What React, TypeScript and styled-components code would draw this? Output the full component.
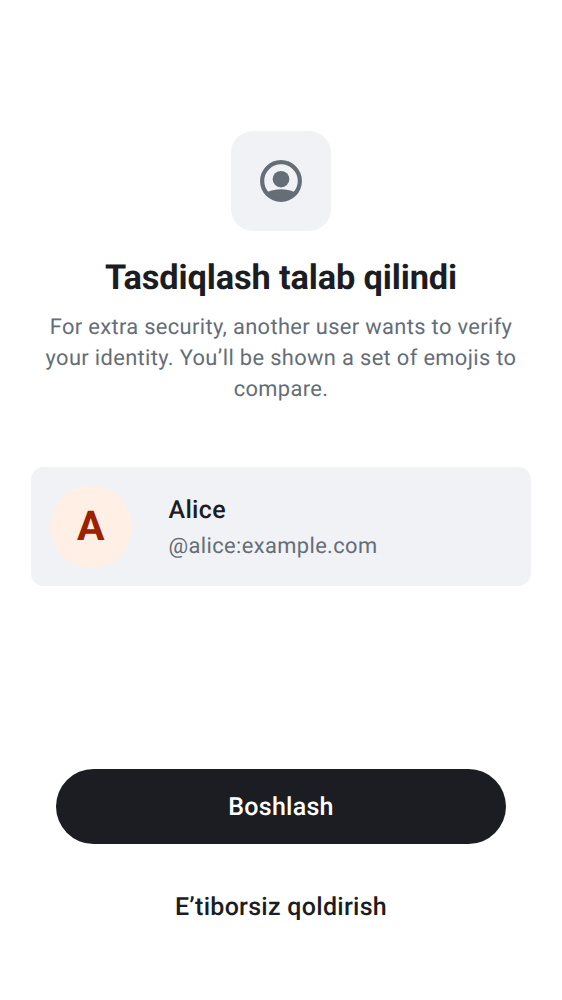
import React from "react";
import styled, { createGlobalStyle } from "styled-components";

const Global = createGlobalStyle`
  * { box-sizing: border-box; }
  body {
    margin: 0;
    background: #fff;
    font-family: Roboto, sans-serif;
    color: #1b1d22;
    text-rendering: geometricPrecision;
  }
`;
const Screen = styled.main`
  height: 1000px;
  padding: 131px 31px 0;
  display: flex;
  flex-direction: column;
  align-items: center;
`;
const IconTile = styled.div`
  width: 100px;
  height: 100px;
  flex: none;
  border-radius: 22px;
  background: #f0f2f5;
  display: grid;
  place-items: center;
`;
const Title = styled.h1`
  margin: 26px 0 0;
  font-size: 34.375px;
  line-height: 42px;
  font-weight: 660;
  letter-spacing: -0.13px;
  white-space: nowrap;
`;
const Description = styled.p`
  margin: 13px 0 0;
  font-size: 21.875px;
  line-height: 31px;
  letter-spacing: 0.35px;
  text-align: center;
  color: #656d77;
  span { display: block; white-space: nowrap; }
`;
const UserCard = styled.section`
  margin-top: 62px;
  width: 500px;
  height: 119px;
  flex: none;
  border-radius: 12.5px;
  background: #f0f2f5;
  padding-left: 18.75px;
  display: flex;
  align-items: center;
`;
const Avatar = styled.div`
  width: 82px;
  height: 82px;
  border-radius: 50%;
  background: #ffefe4;
  color: #9b2200;
  font-size: 41px;
  line-height: 50px;
  font-weight: 700;
  display: grid;
  place-items: center;
`;
const UserText = styled.div`
  margin-left: 36.75px;
  padding-top: 2px;
`;
const Name = styled.div`
  font-size: 25px;
  line-height: 37px;
  font-weight: 500;
  letter-spacing: 0.33px;
`;
const Handle = styled.div`
  font-size: 21.875px;
  line-height: 35px;
  letter-spacing: 0.39px;
  color: #656d77;
`;
const Actions = styled.div`
  margin-top: 183px;
  width: 450px;
  display: flex;
  flex-direction: column;
  gap: 25px;
`;
const Button = styled.button<{ $filled?: boolean }>`
  height: 75px;
  border: 0;
  padding: 1px 0 0;
  border-radius: 38px;
  background: ${(p) => (p.$filled ? "#1b1d22" : "transparent")};
  color: ${(p) => (p.$filled ? "#fff" : "#1b1d22")};
  font: 500 25px/37px Roboto, sans-serif;
  letter-spacing: 0.28px;
  text-rendering: inherit;
`;

export default function App() {
  return (
    <>
      <Global />
      <Screen>
        <IconTile>
          <svg width="50" height="50" viewBox="0 0 24 24" fill="none">
            <circle cx="12" cy="12" r="9.05" stroke="#656d77" strokeWidth="2" />
            <circle cx="12" cy="11.15" r="4" fill="#656d77" />
            <path d="M5.6 17.3C7.5 16.45 9.7 16 12 16s4.500.45 6.4 1.3L18 19L12 21L6 19Z" fill="#656d77" />
          </svg>
        </IconTile>
        <Title>Tasdiqlash talab qilindi</Title>
        <Description>
          <span>For extra security, another user wants to verify</span>
          <span>your identity. You’ll be shown a set of emojis to</span>
          <span>compare.</span>
        </Description>
        <UserCard>
          <Avatar>A</Avatar>
          <UserText>
            <Name>Alice</Name>
            <Handle>@alice:example.com</Handle>
          </UserText>
        </UserCard>
        <Actions>
          <Button $filled>Boshlash</Button>
          <Button>E’tiborsiz qoldirish</Button>
        </Actions>
      </Screen>
    </>
  );
}
